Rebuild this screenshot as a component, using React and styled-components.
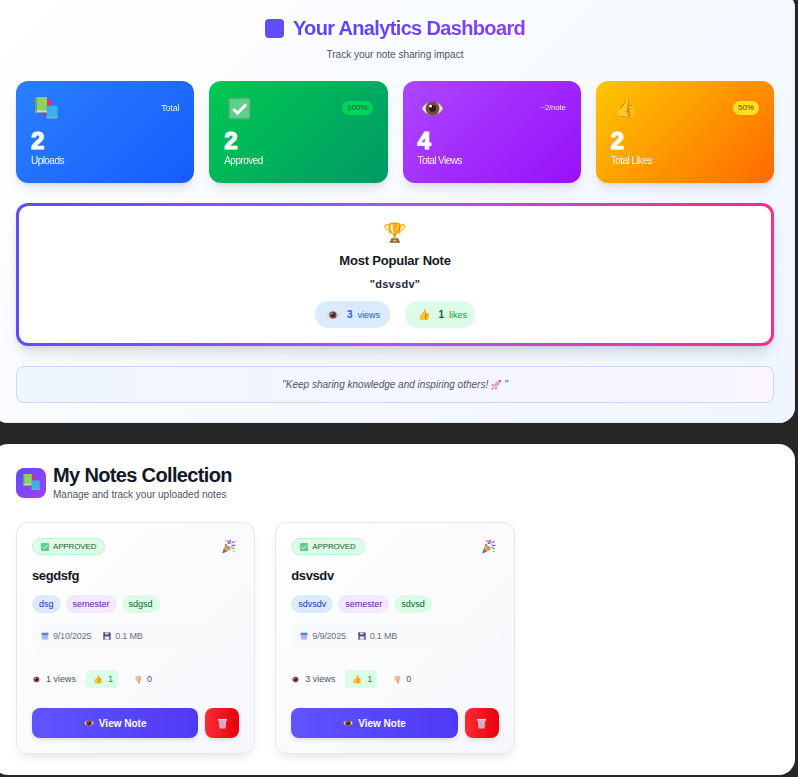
import React from "react";
import styled, { createGlobalStyle } from "styled-components";

const GlobalStyle = createGlobalStyle`
  html, body {
    margin: 0;
    padding: 0;
    height: 777px;
    overflow: hidden;
    background: #262626;
    font-family: "Liberation Sans", Arial, "Noto Color Emoji", sans-serif;
  }
`;

const Page = styled.div`
  width: 803px;
  margin: -8px 0 0 -8px;
  display: flex;
  flex-direction: column;
  gap: 21px;
`;

const AnalyticsPanel = styled.section`
  height: 431px;
  box-sizing: border-box;
  padding: 18px 21px 20px 24px;
  border-radius: 16px;
  background: linear-gradient(135deg, #ffffff 0%, #eff6ff 100%);
  box-shadow: inset 0 0 0 1px #dbeafe;
`;

const Heading = styled.div`
  display: flex;
  justify-content: center;
  align-items: center;
  gap: 9px;
  height: 26px;
  margin-top: 5px;
`;

const HeadingMark = styled.span`
  width: 19px;
  height: 19px;
  border-radius: 4px;
  background: #5f4dff;
`;

const HeadingText = styled.h1`
  margin: 0;
  font-size: 20px;
  line-height: 26px;
  font-weight: 700;
  letter-spacing: -0.65px;
  color: transparent;
  background: linear-gradient(90deg, #4f46ff, #8b3dff);
  background-clip: text;
  -webkit-background-clip: text;
`;

const Subheading = styled.p`
  margin: 7px 0 0;
  text-align: center;
  font-size: 10px;
  line-height: 14px;
  color: #4b5563;
`;

const StatGrid = styled.div`
  display: grid;
  grid-template-columns: repeat(4, 1fr);
  gap: 15px;
  margin-top: 19px;
`;

const StatCard = styled.div`
  height: 102px;
  box-sizing: border-box;
  padding: 12px 15px;
  border-radius: 12px;
  color: #fff;
  background: ${(p) => p.$bg};
  box-shadow: 0 8px 12px -3px rgba(0, 0, 0, 0.1), 0 3px 5px -2px rgba(0, 0, 0, 0.08);
`;

const StatTop = styled.div`
  display: flex;
  justify-content: space-between;
  align-items: center;
  height: 30px;
`;

const StatIcon = styled.span`
  width: 30px;
  height: 30px;
  display: flex;
  align-items: center;
  justify-content: center;
  font-size: 19px;
  line-height: 30px;
`;

const StatNote = styled.span`
  font-size: ${(p) => p.$size}px;
  line-height: 14px;
  letter-spacing: -0.2px;
  color: #fff;
  opacity: 0.9;
`;

const StatBadge = styled.span`
  font-size: 8px;
  line-height: 14px;
  padding: 0 5px;
  border-radius: 8px;
  background: ${(p) => p.$bg};
  color: ${(p) => p.$color};
`;

const StatValue = styled.div`
  margin-top: 5px;
  font-size: 24px;
  line-height: 26px;
  font-weight: 700;
  -webkit-text-stroke: 1.2px #fff;
`;

const StatLabel = styled.div`
  font-size: 10px;
  line-height: 13px;
  letter-spacing: -0.55px;
  opacity: 0.95;
`;

const PopularCard = styled.div`
  margin-top: 20px;
  height: 143px;
  box-sizing: border-box;
  padding: 3px;
  border-radius: 12px;
  background: linear-gradient(90deg, #5b4dff, #a855f7 50%, #f72c8d);
  box-shadow: 0 10px 15px -3px rgba(0, 0, 0, 0.12), 0 4px 6px -2px rgba(0, 0, 0, 0.06);
`;

const PopularInner = styled.div`
  height: 100%;
  box-sizing: border-box;
  padding-top: 13px;
  border-radius: 9px;
  background: #fff;
  display: flex;
  flex-direction: column;
  align-items: center;
`;

const Trophy = styled.div`
  font-size: 19px;
  line-height: 28px;
`;

const PopularTitle = styled.div`
  margin-top: 5px;
  font-size: 13px;
  line-height: 18px;
  font-weight: 700;
  letter-spacing: -0.2px;
  color: #111827;
`;

const PopularName = styled.div`
  margin-top: 6px;
  font-size: 11px;
  line-height: 16px;
  font-weight: 700;
  letter-spacing: 0.3px;
  color: #1f2937;
`;

const PopularPills = styled.div`
  display: flex;
  gap: 15px;
  margin-top: 9px;
`;

const Pill = styled.div`
  height: 27px;
  padding: 0 ${(p) => p.$end}px 0 ${(p) => p.$pad}px;
  border-radius: 14px;
  background: ${(p) => p.$bg};
  display: flex;
  align-items: center;
  font-size: 9px;
  color: ${(p) => p.$color};
`;

const PillIcon = styled.span`
  display: flex;
  font-size: 10px;
  margin-right: 8px;
`;

const PillCount = styled.span`
  font-weight: 700;
  margin-right: 5px;
  color: ${(p) => p.$color};
  font-size: 10px;
`;

const Quote = styled.div`
  margin-top: 20px;
  height: 37px;
  box-sizing: border-box;
  border: 1px solid #bfdbfe;
  border-radius: 8px;
  background: linear-gradient(90deg, #eff6ff, #faf5ff);
  display: flex;
  justify-content: center;
  align-items: center;
  gap: 2px;
  font-size: 10px;
  font-style: italic;
  color: #4b5563;
`;

const NotesPanel = styled.section`
  height: 331px;
  box-sizing: border-box;
  padding: 20px 21px 0 24px;
  border-radius: 16px;
  background: #fff;
`;

const NotesHeader = styled.div`
  display: flex;
  align-items: center;
  gap: 7px;
`;

const NotesMark = styled.div`
  width: 30px;
  height: 30px;
  border-radius: 8px;
  background: linear-gradient(135deg, #5b4dff, #a83dff);
  display: flex;
  align-items: center;
  justify-content: center;
`;

const NotesTitle = styled.h2`
  margin: 0;
  font-size: 20px;
  line-height: 22px;
  font-weight: 700;
  letter-spacing: -0.65px;
  color: #111827;
`;

const NotesSub = styled.p`
  margin: 2px 0 0;
  font-size: 10px;
  line-height: 13px;
  color: #4b5563;
`;

const NotesGrid = styled.div`
  display: grid;
  grid-template-columns: repeat(3, 1fr);
  gap: 20px;
  margin-top: 21px;
`;

const NoteCard = styled.article`
  height: 232px;
  box-sizing: border-box;
  padding: 15px;
  border: 1px solid #e5e7eb;
  border-radius: 12px;
  background: linear-gradient(135deg, #ffffff, #f6f7fb);
  box-shadow: 0 6px 10px -3px rgba(0, 0, 0, 0.1);
`;

const NoteTop = styled.div`
  display: flex;
  justify-content: space-between;
  align-items: center;
  height: 17px;
`;

const StatusBadge = styled.span`
  height: 17px;
  box-sizing: border-box;
  padding: 0 8px;
  border: 1px solid #bbf7d0;
  border-radius: 9px;
  background: #dcfce7;
  color: #166534;
  display: flex;
  align-items: center;
  gap: 4px;
  font-size: 8px;
  letter-spacing: -0.15px;
`;

const Party = styled.span`
  display: flex;
  margin-right: 3px;
`;

const NoteTitle = styled.h3`
  margin: 12px 0 0;
  font-size: 13px;
  line-height: 18px;
  font-weight: 700;
  letter-spacing: -0.4px;
  color: #111827;
`;

const TagRow = styled.div`
  display: flex;
  gap: 5px;
  margin-top: 10px;
`;

const Tag = styled.span`
  height: 18px;
  line-height: 18px;
  padding: 0 7px;
  border-radius: 9px;
  font-size: 9px;
  background: ${(p) => p.$bg};
  color: ${(p) => p.$color};
`;

const MetaBox = styled.div`
  margin-top: 9px;
  height: 28px;
  padding: 0 9px;
  border-radius: 8px;
  background: #f9fafb;
  display: flex;
  align-items: center;
  gap: 12px;
  font-size: 9px;
  letter-spacing: -0.2px;
  color: #6b7280;
`;

const MetaItem = styled.span`
  display: flex;
  align-items: center;
  gap: 4px;
`;

const ReactionRow = styled.div`
  display: flex;
  align-items: center;
  margin-top: 20px;
  height: 18px;
  font-size: 9px;
  color: #4b5563;
`;

const ViewsStat = styled.span`
  display: flex;
  align-items: center;
  gap: 5px;
  margin-right: 10px;
`;

const LikesStat = styled.span`
  display: flex;
  align-items: center;
  gap: 5px;
  height: 18px;
  padding: 0 5px 0 7px;
  margin-right: 16px;
  border-radius: 3px;
  background: #dcfce7;
  color: #00a63e;
`;

const LikeGlyph = styled.span`
  font-size: 8px;
`;

const DislikesStat = styled.span`
  display: flex;
  align-items: center;
  gap: 4px;
`;

const Actions = styled.div`
  display: flex;
  gap: 7px;
  margin-top: 20px;
`;

const ViewButton = styled.button`
  flex: 1;
  height: 30px;
  display: flex;
  align-items: center;
  justify-content: center;
  gap: 5px;
  border: 0;
  border-radius: 8px;
  background: linear-gradient(90deg, #5f55ff, #4f39f6);
  color: #fff;
  font-family: inherit;
  font-size: 10px;
  font-weight: 700;
  box-shadow: 0 2px 4px rgba(0, 0, 0, 0.12);
`;

const TrashButton = styled.button`
  width: 34px;
  height: 30px;
  padding: 0;
  display: flex;
  align-items: center;
  justify-content: center;
  border: 0;
  border-radius: 8px;
  background: linear-gradient(90deg, #fb2c36, #e7000b);
  box-shadow: 0 2px 4px rgba(0, 0, 0, 0.12);
`;

const Books = ({ size }) => (
  <svg width={size} height={size} viewBox="0 0 24 24">
    <rect x="9" y="3" width="8" height="16" rx="1" fill="#e2305f" />
    <rect x="7" y="16" width="8" height="3" fill="#b03a78" />
    <rect x="0.5" y="0" width="12" height="16" rx="1" fill="#8ad265" />
    <rect x="0.5" y="14" width="12" height="2" fill="#cfe0c8" />
    <rect x="0.5" y="0" width="1.5" height="16" fill="#5fa84a" />
    <rect x="12" y="9" width="11.5" height="13" rx="1" fill="#38b2ee" />
    <rect x="12" y="20.5" width="11.5" height="2" fill="#7fa8dc" />
  </svg>
);

const CheckBox = ({ size }) => (
  <svg width={size} height={size} viewBox="0 0 24 24">
    <rect x="1" y="1" width="22" height="22" rx="2" fill="#5ecf8b" stroke="#4aa873" strokeWidth="1.4" />
    <path d="M5.5 12.5 L10 17 L19 7.5" fill="none" stroke="#fff" strokeWidth="3" />
  </svg>
);

const Eye = ({ size }) => (
  <svg width={size} height={size} viewBox="0 0 24 24">
    <path d="M1 12 C5 3 19 3 23 12 C19 21 5 21 1 12Z" fill="#e6e3e6" stroke="#8f8a90" strokeWidth="0.8" />
    <circle cx="12" cy="12" r="7.2" fill="#7a4a42" />
    <circle cx="12" cy="12" r="3.6" fill="#2c1a1c" />
    <circle cx="10" cy="9.6" r="1.4" fill="#fff" />
  </svg>
);

const Calendar = ({ size }) => (
  <svg width={size} height={size} viewBox="0 0 24 24">
    <rect x="2" y="2" width="20" height="21" rx="2" fill="#c9c5ea" />
    <rect x="2" y="2" width="20" height="8" rx="1.5" fill="#3c90e8" />
    <path d="M3 14h18M3 18h18M8 10v12M13 10v12M18 10v12" stroke="#a8a2d4" strokeWidth="1.2" />
  </svg>
);

const Floppy = ({ size }) => (
  <svg width={size} height={size} viewBox="0 0 24 24">
    <path d="M1 1h19l3 3v19H1z" fill="#553f7d" />
    <rect x="6" y="1" width="11" height="7" fill="#cfc8de" />
    <rect x="5" y="13" width="14" height="10" fill="#e8e4ee" />
  </svg>
);

const Trash = ({ size }) => (
  <svg width={size} height={size} viewBox="0 0 24 24">
    <rect x="2" y="2" width="20" height="4" fill="#e6d0dc" />
    <path d="M4 6h16l-1.5 17h-13z" fill="#d8b8c8" />
    <path d="M8.5 8l.7 13M12 8v13M15.5 8l-.7 13" stroke="#c496ac" strokeWidth="1.2" />
  </svg>
);

const ThumbDown = ({ size }) => (
  <svg width={size} height={size} viewBox="0 0 24 24">
    <rect x="4" y="2" width="15" height="13" rx="4" fill="#f2bfaa" />
    <path d="M10 12h6v8a3 3 0 0 1-6 0z" fill="#e8a48e" />
    <path d="M16 4v9" stroke="#d99680" strokeWidth="1.4" />
  </svg>
);

const Popper = ({ size }) => (
  <svg width={size} height={size} viewBox="0 0 24 24">
    <path d="M2 23 L7 8 L16 17z" fill="#e8a33d" />
    <path d="M2 23 L4.5 15.5 L9 20z" fill="#5a63c9" />
    <path d="M7 8 L10 11 M11 12 L14 15" stroke="#4a78d8" strokeWidth="2" />
    <path d="M11 2l1 6M15 1l-1 7" stroke="#7c5bd6" strokeWidth="2" />
    <path d="M17 6l5-2M17 10l6 0" stroke="#f0389a" strokeWidth="2" />
    <path d="M16 13l6 3" stroke="#39b6e8" strokeWidth="2" />
    <circle cx="20" cy="20" r="1.4" fill="#f0a030" />
    <circle cx="8" cy="3" r="1.3" fill="#e8c030" />
  </svg>
);

const Rocket = ({ size }) => (
  <svg width={size} height={size} viewBox="0 0 24 24">
    <path d="M7 13 C10 7 15 3 22 2 C21 9 17 14 11 17z" fill="#d8a8d8" />
    <path d="M17 2.8 C19 2.3 20.5 2.1 22 2 C21.8 3.5 21.5 5 21 6.5z" fill="#e8324f" />
    <path d="M7 13l-4 1 3-5zM11 17l-1 4 5-3z" fill="#e8324f" />
    <path d="M8 16l-5 5" stroke="#f08a3c" strokeWidth="2.2" />
  </svg>
);

const stats = [
  { Icon: Books, value: 2, label: "Uploads", note: "Total", noteSize: 9, bg: "linear-gradient(135deg, #2b7fff, #155dfc)" },
  { Icon: CheckBox, value: 2, label: "Approved", badge: "100%", badgeBg: "#00d45c", badgeColor: "#0d542b", bg: "linear-gradient(135deg, #00c950, #009966)" },
  { Icon: Eye, value: 4, label: "Total Views", note: "~2/note", noteSize: 8, bg: "linear-gradient(135deg, #ad46ff, #9810fa)" },
  { emoji: "👍", value: 2, label: "Total Likes", badge: "50%", badgeBg: "#ffdf20", badgeColor: "#733e0a", bg: "linear-gradient(135deg, #fdc700, #ff6900)" },
];

const notes = [
  { title: "segdsfg", tags: ["dsg", "semester", "sdgsd"], date: "9/10/2025", views: 1 },
  { title: "dsvsdv", tags: ["sdvsdv", "semester", "sdvsd"], date: "9/9/2025", views: 3 },
];

const tagColors = [
  { bg: "#dbeafe", color: "#193cb8" },
  { bg: "#f3e8ff", color: "#6e11b0" },
  { bg: "#dcfce7", color: "#016630" },
];

export default function App() {
  return (
    <>
      <GlobalStyle />
      <Page>
        <AnalyticsPanel>
          <Heading>
            <HeadingMark />
            <HeadingText>Your Analytics Dashboard</HeadingText>
          </Heading>
          <Subheading>Track your note sharing impact</Subheading>
          <StatGrid>
            {stats.map((s) => (
              <StatCard key={s.label} $bg={s.bg}>
                <StatTop>
                  <StatIcon>{s.Icon ? <s.Icon size={23} /> : s.emoji}</StatIcon>
                  {s.badge ? (
                    <StatBadge $bg={s.badgeBg} $color={s.badgeColor}>{s.badge}</StatBadge>
                  ) : (
                    <StatNote $size={s.noteSize}>{s.note}</StatNote>
                  )}
                </StatTop>
                <StatValue>{s.value}</StatValue>
                <StatLabel>{s.label}</StatLabel>
              </StatCard>
            ))}
          </StatGrid>
          <PopularCard>
            <PopularInner>
              <Trophy>🏆</Trophy>
              <PopularTitle>Most Popular Note</PopularTitle>
              <PopularName>"dsvsdv"</PopularName>
              <PopularPills>
                <Pill $bg="#dbeafe" $color="#155dfc" $pad={12} $end={10}>
                  <PillIcon><Eye size={12} /></PillIcon>
                  <PillCount $color="#155dfc">3</PillCount>views
                </Pill>
                <Pill $bg="#dcfce7" $color="#00a63e" $pad={13} $end={8}>
                  <PillIcon>👍</PillIcon>
                  <PillCount $color="#016630">1</PillCount>likes
                </Pill>
              </PopularPills>
            </PopularInner>
          </PopularCard>
          <Quote>"Keep sharing knowledge and inspiring others! <Rocket size={12} />"</Quote>
        </AnalyticsPanel>
        <NotesPanel>
          <NotesHeader>
            <NotesMark><Books size={17} /></NotesMark>
            <div>
              <NotesTitle>My Notes Collection</NotesTitle>
              <NotesSub>Manage and track your uploaded notes</NotesSub>
            </div>
          </NotesHeader>
          <NotesGrid>
            {notes.map((n) => (
              <NoteCard key={n.title}>
                <NoteTop>
                  <StatusBadge><CheckBox size={8} /> APPROVED</StatusBadge>
                  <Party><Popper size={15} /></Party>
                </NoteTop>
                <NoteTitle>{n.title}</NoteTitle>
                <TagRow>
                  {n.tags.map((t, i) => (
                    <Tag key={t} $bg={tagColors[i].bg} $color={tagColors[i].color}>{t}</Tag>
                  ))}
                </TagRow>
                <MetaBox>
                  <MetaItem><Calendar size={8} /> {n.date}</MetaItem>
                  <MetaItem><Floppy size={8} /> 0.1 MB</MetaItem>
                </MetaBox>
                <ReactionRow>
                  <ViewsStat><Eye size={9} /> {n.views} views</ViewsStat>
                  <LikesStat><LikeGlyph>👍</LikeGlyph> 1</LikesStat>
                  <DislikesStat><ThumbDown size={9} /> 0</DislikesStat>
                </ReactionRow>
                <Actions>
                  <ViewButton><Eye size={10} /> View Note</ViewButton>
                  <TrashButton><Trash size={11} /></TrashButton>
                </Actions>
              </NoteCard>
            ))}
          </NotesGrid>
        </NotesPanel>
      </Page>
    </>
  );
}
